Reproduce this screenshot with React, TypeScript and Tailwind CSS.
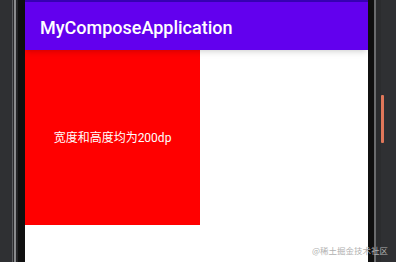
import React from "react"

const Watermark = () => (
  <div className="absolute right-[8px] bottom-[8px] text-[8.5px] leading-none text-[#b0b0b0] font-['Noto_Sans_CJK_SC',sans-serif]">
    @稀土掘金技术社区
  </div>
)

const LeftFrame = () => (
  <div className="flex h-full w-[25px] shrink-0">
    <div className="w-[12px] bg-[#2f3033]" />
    <div className="w-[1px] bg-[#5c5d60]" />
    <div className="w-[1px] bg-[#2a2a2c]" />
    <div className="w-[2px] bg-[#8a8b8d]" />
    <div className="w-[2px] bg-[#252527]" />
    <div className="w-[7px] bg-[#101010]" />
  </div>
)

const RightFrame = () => (
  <div className="flex h-full w-[28px] shrink-0">
    <div className="w-[6px] bg-[#101010]" />
    <div className="w-[2px] bg-[#6a6b6d]" />
    <div className="w-[5px] bg-[#2b2c2e]" />
    <div className="flex w-[15px] flex-col bg-[#2f3033]">
      <div className="mt-[95px] h-[48px] w-[3px] rounded-[1px] bg-[#e0775a]" />
    </div>
  </div>
)

export default function App() {
  return (
    <div className="relative flex h-[262px] w-[396px] overflow-hidden bg-[#2f3033]">
      <LeftFrame />
      <div className="flex h-full w-[343px] shrink-0 flex-col bg-white">
        <div className="h-[2px] bg-[#3700B3]" />
        <div className="relative z-10 flex h-[48px] items-center bg-[#6200EE] pl-[15px] pt-[2px] shadow-md">
          <span className="font-['Roboto',sans-serif] text-[18px] font-medium text-white">
            MyComposeApplication
          </span>
        </div>
        <div className="flex h-[175px] w-[175px] items-center justify-center bg-[#ff0000]">
          <span className="font-['Roboto','Noto_Sans_CJK_SC',sans-serif] text-[12px] text-white">
            宽度和高度均为200dp
          </span>
        </div>
      </div>
      <RightFrame />
      <Watermark />
    </div>
  )
}
